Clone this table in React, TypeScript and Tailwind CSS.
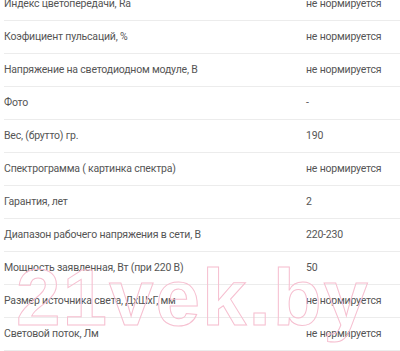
import React from "react";

const rows: [string, string][] = [
  ["Индекс цветопередачи, Ra", "не нормируется"],
  ["Коэфициент пульсаций, %", "не нормируется"],
  ["Напряжение на светодиодном модуле, В", "не нормируется"],
  ["Фото", "-"],
  ["Вес, (брутто) гр.", "190"],
  ["Спектрограмма ( картинка спектра)", "не нормируется"],
  ["Гарантия, лет", "2"],
  ["Диапазон рабочего напряжения в сети, В", "220-230"],
  ["Мощность заявленная, Вт (при 220 В)", "50"],
  ["Размер источника света, ДхШхГ, мм", "не нормируется"],
  ["Световой поток, Лм", "не нормируется"],
];

export default function App() {
  return (
    <div className="relative h-[351px] w-[400px] overflow-hidden bg-white">
      <div className="ml-1 mt-[-12px] font-['Roboto',sans-serif] text-[10.5px] tracking-[-0.2px] text-[#555]">
        {rows.map(([k, v], i) => (
          <div key={i} className="flex h-[33px] items-center border-b border-[#ececec]">
            <div className="w-[302px] shrink-0">{k}</div>
            <div>{v}</div>
          </div>
        ))}
      </div>
      <div
        className="pointer-events-none absolute left-[16px] top-[258px] whitespace-nowrap font-['Liberation_Sans',sans-serif] text-[80px] font-bold leading-none text-transparent tracking-[2px]"
        style={{ WebkitTextStroke: "1px #f6bfd0" }}
      >
        21vek.by
      </div>
    </div>
  );
}
